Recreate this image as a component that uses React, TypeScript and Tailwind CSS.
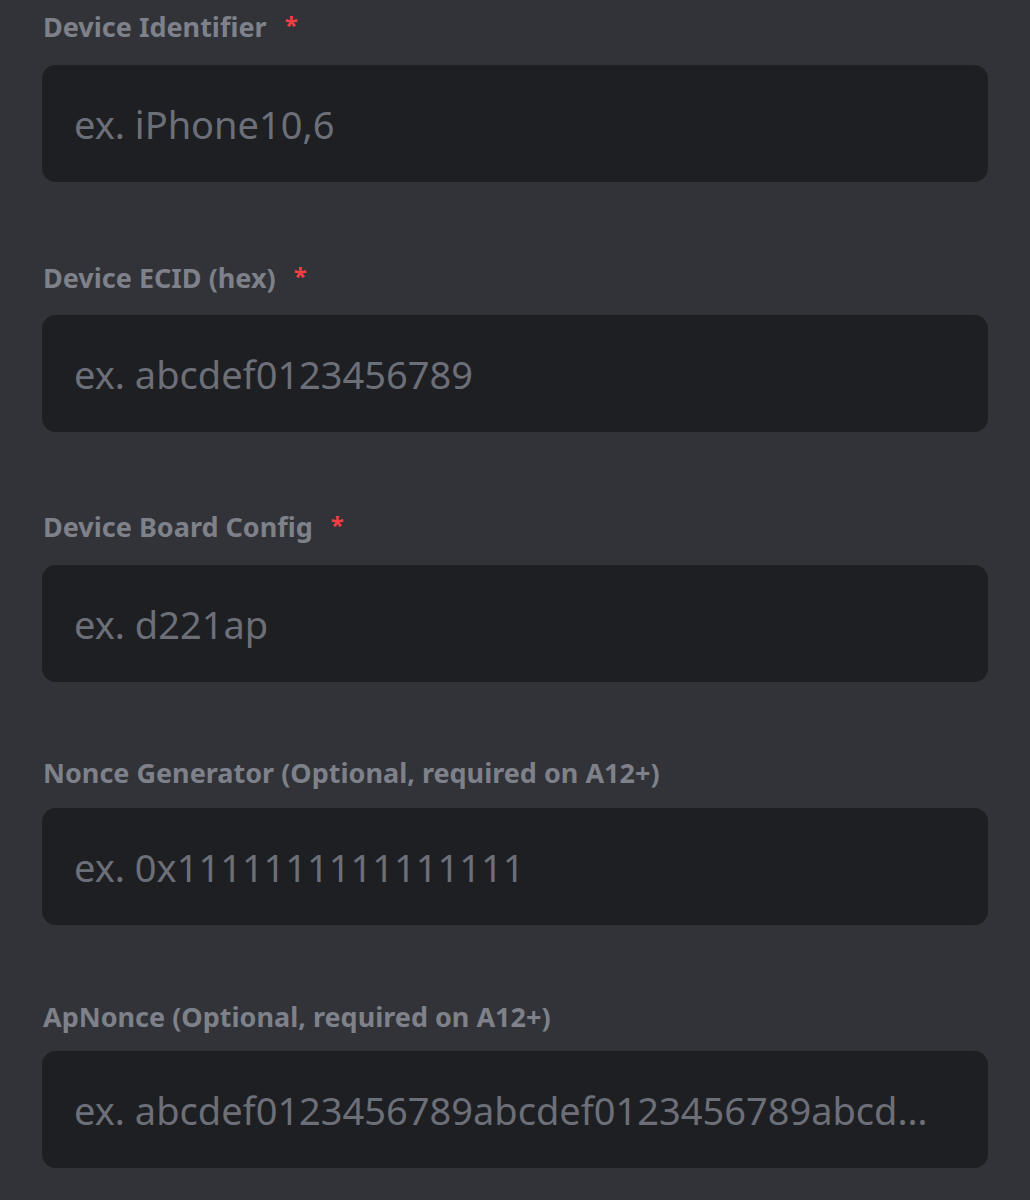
const fields = [
  {
    label: "Device Identifier",
    required: true,
    placeholder: "ex. iPhone10,6",
    wrap: "pt-[10px]",
    gap: "mb-[21px]",
  },
  {
    label: "Device ECID (hex)",
    required: true,
    placeholder: "ex. abcdef0123456789",
    wrap: "pt-[79px]",
    gap: "mb-[20px]",
  },
  {
    label: "Device Board Config",
    required: true,
    placeholder: "ex. d221ap",
    wrap: "pt-[78px]",
    gap: "mb-[21px]",
  },
  {
    label: "Nonce Generator (Optional, required on A12+)",
    required: false,
    placeholder: "ex. 0x1111111111111111",
    wrap: "pt-[74px]",
    gap: "mb-[18px]",
  },
  {
    label: "ApNonce (Optional, required on A12+)",
    required: false,
    placeholder:
      "ex. abcdef0123456789abcdef0123456789abcdef0123456789abcdef0123456789",
    wrap: "pt-[75px]",
    gap: "mb-[17px]",
  },
];

export default function App() {
  return (
    <div className="min-h-[1200px] w-full bg-[#313338] px-[42px] font-['Noto_Sans','Open_Sans',sans-serif]">
      {fields.map((field, index) => (
        <div key={index} className={field.wrap}>
          <label
            className={`flex items-start h-[34px] pl-px text-[27px] leading-[34px] font-bold text-[#7e8189] ${field.gap}`}
          >
            {field.label}
            {field.required && (
              <span className="ml-[18px] mt-[3px] text-[24px] leading-[24px] text-[#f23f43]">
                *
              </span>
            )}
          </label>
          <input
            type="text"
            placeholder={field.placeholder}
            className="block w-full h-[117px] rounded-[14px] bg-[#1e1f22] pl-[32px] pr-[44px] text-[38px] text-[#dbdee1] placeholder:text-[#6d6f78] outline-none text-ellipsis"
          />
        </div>
      ))}
    </div>
  );
}
